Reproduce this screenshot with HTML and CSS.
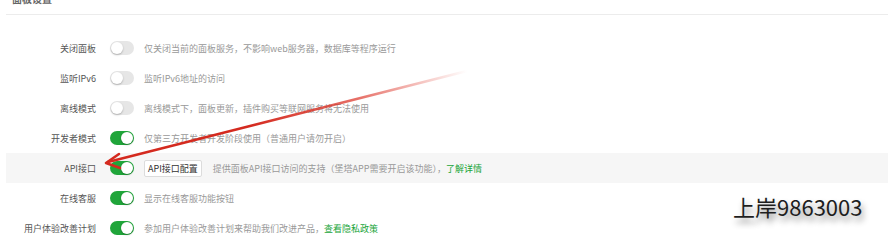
FILE: index.html
```html
<!DOCTYPE html>
<html lang="zh-CN">
<head>
  <meta charset="UTF-8" />
  <title>面板设置</title>
  <link rel="stylesheet" href="styles.css">
</head>
<body>
  <div class="panel">
    <div class="panel-head">
      <h2>面板设置</h2>
    </div>

    <div class="setting-list">
      <div class="setting-row">
        <span class="label">关闭面板</span>
        <span class="switch"></span>
        <span class="desc">仅关闭当前的面板服务，不影响web服务器，数据库等程序运行</span>
      </div>
      <div class="setting-row">
        <span class="label">监听IPv6</span>
        <span class="switch"></span>
        <span class="desc">监听IPv6地址的访问</span>
      </div>
      <div class="setting-row">
        <span class="label">离线模式</span>
        <span class="switch"></span>
        <span class="desc">离线模式下，面板更新，插件购买等联网服务将无法使用</span>
      </div>
      <div class="setting-row">
        <span class="label">开发者模式</span>
        <span class="switch on"></span>
        <span class="desc">仅第三方开发者开发阶段使用（普通用户请勿开启）</span>
      </div>
      <div class="setting-row active">
        <span class="label">API接口</span>
        <span class="switch on"></span>
        <button class="btn">API接口配置</button>
        <span class="desc">提供面板API接口访问的支持（堡塔APP需要开启该功能），<a href="#">了解详情</a></span>
      </div>
      <div class="setting-row">
        <span class="label">在线客服</span>
        <span class="switch on"></span>
        <span class="desc">显示在线客服功能按钮</span>
      </div>
      <div class="setting-row">
        <span class="label">用户体验改善计划</span>
        <span class="switch on"></span>
        <span class="desc">参加用户体验改善计划来帮助我们改进产品，<a href="#">查看隐私政策</a></span>
      </div>
    </div>
  </div>

  <!-- 标注箭头 -->
  <svg class="arrow" width="888" height="241" viewBox="0 0 888 241">
    <defs>
      <linearGradient id="fade" x1="467" y1="71" x2="105" y2="163" gradientUnits="userSpaceOnUse">
        <stop offset="0" stop-color="#e0392c" stop-opacity="0"/>
        <stop offset="0.3" stop-color="#dc3327" stop-opacity="0.7"/>
        <stop offset="0.6" stop-color="#d42a1f" stop-opacity="1"/>
        <stop offset="1" stop-color="#d42a1f" stop-opacity="1"/>
      </linearGradient>
    </defs>
    <path d="M467 71 L108 162" stroke="url(#fade)" stroke-width="2.6" stroke-linecap="round" fill="none"/>
    <path d="M119 154 L106 163 L120 168" stroke="#d42a1f" stroke-width="2.6" stroke-linecap="round" stroke-linejoin="round" fill="none"/>
  </svg>

  <div class="watermark">上岸9863003</div>
</body>
</html>
```

FILE: styles.css
```css
body {
  margin: 0;
  background: #fff;
  font-family: "Noto Sans CJK SC", "Liberation Sans", sans-serif;
  overflow: hidden;
}

.panel {
  padding-left: 6px;
}

.panel-head {
  display: flow-root;
  height: 14px;
  border-bottom: 1px solid #ececec;
}

.panel-head h2 {
  margin: -6px 0 0 6px;
  font-size: 10px;
  line-height: 10px;
  font-weight: bold;
  color: #666;
}

.setting-list {
  margin-top: 18px;
}

.setting-row {
  display: flex;
  align-items: center;
  height: 30px;
  font-size: 9px;
}

.setting-row.active {
  background: #f6f6f6;
}

.label {
  width: 90px;
  text-align: right;
  color: #555;
  flex-shrink: 0;
}

.switch {
  position: relative;
  width: 24px;
  height: 14px;
  margin: 0 10px 0 14px;
  border-radius: 7px;
  background: #e6e6e6;
  flex-shrink: 0;
}

.switch::after {
  content: "";
  position: absolute;
  top: 1px;
  left: 1px;
  width: 12px;
  height: 12px;
  border-radius: 50%;
  background: #fff;
  box-shadow: 0 1px 2px rgba(0,0,0,0.25);
}

.switch.on {
  background: #20a53a;
}

.switch.on::after {
  left: 11px;
}

.btn {
  height: 17px;
  padding: 0 3px;
  margin-right: 11px;
  border: 1px solid #dcdcdc;
  border-radius: 2px;
  background: #fff;
  color: #333;
  font-family: inherit;
  font-size: 9px;
}

.desc {
  color: #999;
  white-space: nowrap;
}

.desc a {
  color: #20a53a;
  text-decoration: none;
}

.arrow {
  position: absolute;
  top: 0;
  left: 0;
  pointer-events: none;
}

.watermark {
  position: absolute;
  left: 733px;
  top: 192px;
  font-size: 22px;
  line-height: 28px;
  color: #1e1e1e;
  font-family: "Noto Sans CJK SC", "Liberation Sans", sans-serif;
  text-shadow: 2px 5px 6px rgba(0,0,0,0.45);
}
```
